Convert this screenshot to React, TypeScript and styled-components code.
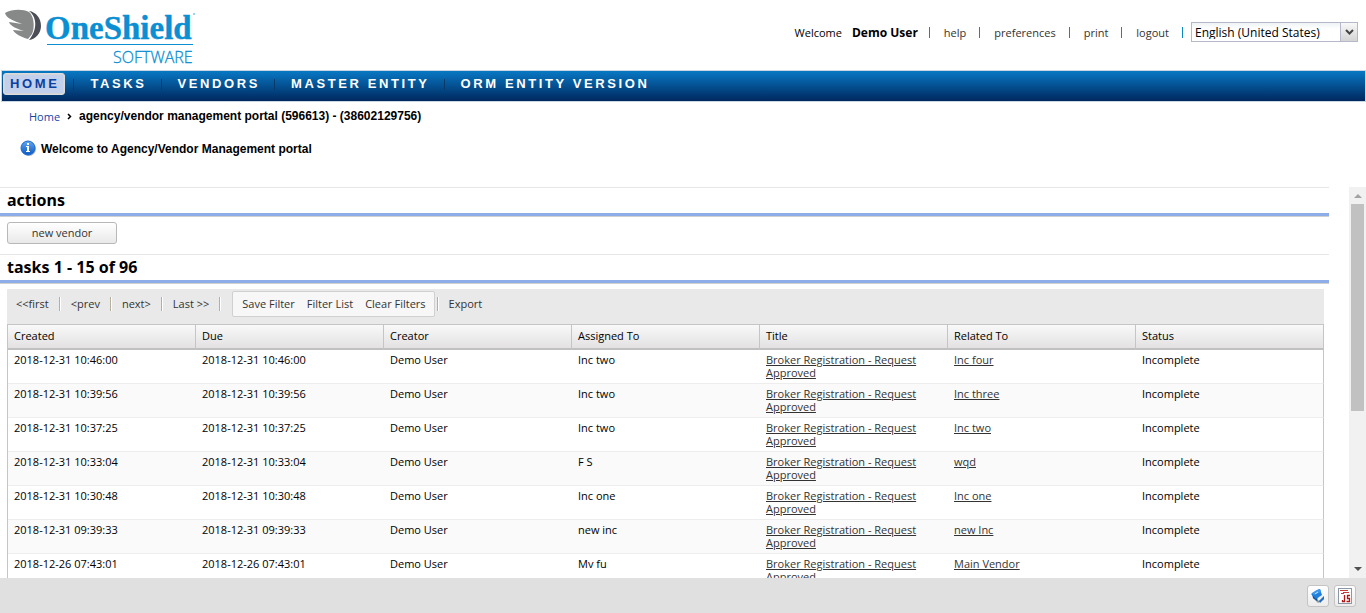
import React from 'react';
import styled, { createGlobalStyle } from 'styled-components';

const GlobalStyle = createGlobalStyle`
  * { box-sizing: border-box; }
  body {
    margin: 0;
    background: #fff;
    color: #000;
    font: 11px/13px "Open Sans", Tahoma, sans-serif;
  }
  button, select { font: inherit; color: inherit; }
`;

const Page = styled.div`
  display: flex;
  flex-direction: column;
  height: 100vh;
  overflow: hidden;
`;

const Header = styled.header`
  display: flex;
  flex: none;
  justify-content: space-between;
  align-items: flex-start;
  height: 70px;
`;

const Logo = styled.svg`
  display: block;
  flex: none;
`;

const UserBar = styled.div`
  display: flex;
  align-items: center;
  padding: 22px 8px 0 0;
`;

const Welcome = styled.span`
  margin-right: 10px;
`;

const UserName = styled.strong`
  margin-right: 11px;
  font-size: 12px;
`;

const Divider = styled.span<{ $last?: boolean }>`
  width: 1px;
  height: 11px;
  margin-right: ${p => (p.$last ? 8 : 14)}px;
  background: #0a8ac0;
`;

const UserLink = styled.a`
  margin-right: 13px;
  color: #333;
  text-decoration: none;
`;

const SelectBox = styled.label`
  display: flex;
  width: 167px;
  height: 20px;
  border: 1px solid #b5b8c8;
  background: linear-gradient(#eef3f5, #fff 6px);
`;

const LanguageSelect = styled.select`
  flex: 1;
  min-width: 0;
  padding: 0 3px;
  border: 0;
  background: none;
  appearance: none;
  font-size: 12px;
`;

const Trigger = styled.span`
  display: flex;
  align-items: center;
  justify-content: center;
  width: 17px;
  border-left: 1px solid #b5b8c8;
  background: linear-gradient(#f8f8f8, #d4d4d4);
`;

const Nav = styled.nav`
  display: flex;
  flex: none;
  align-items: flex-start;
  height: 32px;
  margin-left: 1px;
  padding: 2px 1px;
  border: 1px solid #c9d7e4;
  background: linear-gradient(#0878c4, #00285e);
`;

const NavItem = styled.a<{ $active?: boolean }>`
  height: 22px;
  padding: 0 ${p => (p.$active ? 5 : 14)}px 0 ${p => (p.$active ? 6 : 16)}px;
  border: ${p => (p.$active ? '1px solid #dcdcdc' : '1px solid transparent')};
  border-width: 1px ${p => (p.$active ? 1 : 0)}px;
  border-radius: 3px;
  background: ${p => (p.$active ? '#c3d0ec' : 'none')};
  box-shadow: ${p => (p.$active ? 'inset 0 0 0 1px #d5d5d5' : 'none')};
  color: ${p => (p.$active ? '#0a40a0' : '#fff')};
  font: bold 13px/20px "Liberation Sans", Arial, sans-serif;
  letter-spacing: 0.2em;
  text-decoration: none;
  white-space: nowrap;
`;

const NavDivider = styled.span<{ $wide?: boolean }>`
  width: 1px;
  height: 11px;
  margin: 6px 0 0 ${p => (p.$wide ? 8 : 0)}px;
  background: #0a3a68;
`;

const Breadcrumb = styled.nav`
  display: flex;
  flex: none;
  align-items: center;
  height: 28px;
  padding-left: 29px;
`;

const CrumbLink = styled.a`
  color: #1546a8;
  text-decoration: none;
`;

const Chevron = styled.svg`
  margin: 0 7px;
`;

const Strong = styled.strong`
  font: bold 12px/14px "Liberation Sans", Arial, sans-serif;
`;

const Notice = styled.div`
  display: flex;
  flex: none;
  gap: 5px;
  height: 57px;
  padding: 10px 0 0 20px;

  strong { padding-top: 2px; }
`;

const Body = styled.div`
  display: flex;
  flex: 1;
  gap: 20px;
  min-height: 0;
`;

const Content = styled.main`
  flex: 1;
  min-width: 0;
  overflow: hidden;
`;

const SectionTitle = styled.h2`
  height: 30px;
  margin: 0;
  padding-left: 7px;
  border-top: 1px solid #e6e6e6;
  border-bottom: 1px solid #d0d0d0;
  box-shadow: inset 0 -3px #8dade8;
  font: bold 16px/25px "Noto Sans", Tahoma, sans-serif;
`;

const Actions = styled.div`
  height: 37px;
  padding: 5px 7px;
`;

const ActionButton = styled.button`
  display: block;
  width: 110px;
  height: 22px;
  padding: 0 0 1px;
  border: 1px solid #b8b8b8;
  border-radius: 3px;
  background: linear-gradient(#fff, #e9e9e9);
  color: #333;
`;

const Grid = styled.div`
  margin: 5px 5px 0 7px;
`;

const Toolbar = styled.div`
  display: flex;
  align-items: center;
  height: 35px;
  padding: 0 0 5px 6px;
  background: #e9e9e9;
`;

const ToolButton = styled.button`
  padding: 0 3px 2px;
  border: 0;
  background: none;
  color: #333;
  white-space: nowrap;
`;

const ToolDivider = styled.span`
  width: 2px;
  height: 14px;
  margin: 0 7px;
  border-left: 1px solid #b5b09c;
  border-right: 1px solid #fff;
`;

const FilterGroup = styled.div`
  display: flex;
  align-items: center;
  gap: 6px;
  height: 26px;
  margin: 0 -5px 0 4px;
  padding: 0 5px 0 6px;
  border: 1px solid #d0d0d0;
  border-radius: 2px;
  background: #f7f7f7;
`;

const Table = styled.table`
  width: 100%;
  table-layout: fixed;
  border-collapse: separate;
  border-spacing: 0;
  border: solid #c5c5c5;
  border-width: 1px 0 0 1px;
`;

const Th = styled.th`
  height: 25px;
  padding: 0 6px 2px;
  border-right: 1px solid #c5c5c5;
  border-bottom: 2px solid #c0c0c0;
  background: linear-gradient(#f9f9f9, #e3e1e1);
  font-weight: normal;
  text-align: left;
`;

const Tr = styled.tr`
  &:nth-child(even) { background: #fafafa; }
`;

const Td = styled.td`
  height: 34px;
  padding: 3px 6px 4px;
  border-bottom: 1px solid #ededed;
  vertical-align: top;

  &:last-child { border-right: 1px solid #c5c5c5; }
`;

const CellLink = styled.a`
  display: block;
  max-width: 160px;
  color: #333;
  text-decoration: underline;
`;

const ScrollTrack = styled.div`
  display: flex;
  flex-direction: column;
  align-items: center;
  justify-content: space-between;
  width: 17px;
  background: #f1f1f1;
`;

const ScrollRail = styled.div`
  flex: 1;
  width: 13px;
`;

const ScrollThumb = styled.div`
  height: 58%;
  background: #c1c1c1;
`;

const Arrow = styled.svg`
  flex: none;
  display: block;
`;

const Footer = styled.footer`
  display: flex;
  flex: none;
  justify-content: flex-end;
  gap: 5px;
  height: 35px;
  padding: 7px 10px;
  background: #e0e0e0;
`;

const IconButton = styled.button`
  display: flex;
  align-items: center;
  justify-content: center;
  width: 22px;
  height: 22px;
  padding: 0;
  border: 1px solid #c4c4c4;
  border-radius: 3px;
  background: linear-gradient(#fff, #ececec);
`;

const columns = ['Created', 'Due', 'Creator', 'Assigned To', 'Title', 'Related To', 'Status'];

const tasks = [
  ['2018-12-31 10:46:00', 'Inc two', 'Inc four'],
  ['2018-12-31 10:39:56', 'Inc two', 'Inc three'],
  ['2018-12-31 10:37:25', 'Inc two', 'Inc two'],
  ['2018-12-31 10:33:04', 'F S', 'wqd'],
  ['2018-12-31 10:30:48', 'Inc one', 'Inc one'],
  ['2018-12-31 09:39:33', 'new inc', 'new Inc'],
  ['2018-12-26 07:43:01', 'Mv fu', 'Main Vendor'],
];

const userLinks = ['help', 'preferences', 'print', 'logout'];
const navItems = ['TASKS', 'VENDORS', 'MASTER ENTITY', 'ORM ENTITY VERSION'];
const pageButtons = ['<<first', '<prev', 'next>', 'Last >>'];
const filterButtons = ['Save Filter', 'Filter List', 'Clear Filters'];

function BrandLogo() {
  return (
    <Logo width="200" height="70" role="img" aria-label="OneShield Software">
      <path d="M5 13 C12 9 23 9 29 12 C34 16 35 27 32 34 L28 39 C21 37 15 34 13 30 L24 31 C17 29 10 26 9 22 L22 24 C14 21 6 18 5 13Z" fill="#878888" />
      <path d="M29 11 C36 12 41 18 41 26 C41 33 36 39 29 40 C34 34 36 27 35 21 C34 16 32 13 29 11Z" fill="#4b4d57" />
      <text x="45" y="39" fill="#0b8fd3" stroke="#0b8fd3" strokeWidth=".4" fontFamily="Liberation Serif, serif" fontWeight="bold" fontSize="33">OneShield</text>
      <rect x="47" y="44" width="146" height="1" fill="#0b8fd3" />
      <text x="113" y="63" fill="#0b8fd3" stroke="#0b8fd3" strokeWidth=".3" fontFamily="Open Sans, sans-serif" fontWeight="300" fontSize="16">SOFTWARE</text>
      <circle cx="194" cy="14" r="1" fill="#7cc4e8" />
    </Logo>
  );
}

function InfoIcon() {
  return (
    <svg width="16" height="16" viewBox="0 0 16 16" aria-hidden="true">
      <defs>
        <linearGradient id="info" x2="0" y2="1">
          <stop stopColor="#62a8f0" />
          <stop offset="1" stopColor="#0a58c4" />
        </linearGradient>
      </defs>
      <circle cx="9" cy="9" r="7" fill="#b9bcc2" />
      <circle cx="8" cy="8" r="7" fill="url(#info)" stroke="#1a6ad0" />
      <rect x="7" y="3" width="2" height="2" fill="#fff" />
      <path d="M6 6h3v5h1v1H6v-1h1V7H6z" fill="#fff" />
    </svg>
  );
}

function BookIcon() {
  return (
    <svg width="16" height="16" viewBox="0 0 16 16" aria-hidden="true">
      <path d="M3 10l5 5 6-4-2-2z" fill="#8e979f" />
      <path d="M2 6l1 4 4 3 1-2z" fill="#0d4f9c" />
      <path d="M7 11l4-4 3 2-5 4z" fill="#e8eef4" />
      <path d="M1 6l6-4 3-1 2 6-6 4z" fill="#1f7fdc" />
      <path d="M2 5l5-3 3-1 1 3-7 3z" fill="#3f97ea" />
      <path d="M9 13l5-5v3l-4 4z" fill="#1a6cc4" />
      <path d="M5 6l3-2" stroke="#c4e1fa" />
    </svg>
  );
}

function ScriptIcon() {
  return (
    <svg width="16" height="16" viewBox="0 0 16 16" aria-hidden="true">
      <rect x="1.5" y=".5" width="13" height="15" fill="#fff" stroke="#8b97a5" />
      <path d="M3 2.500h8M6 4.500h6M4 5.500h3" stroke="#c43c3c" />
      <path d="M7.500 7v6.500H5M5.500 12v2M13 7.500h-2.500v3h2v3H9.500" fill="none" stroke="#b01818" strokeWidth="1.3" />
    </svg>
  );
}

export default function App() {
  return (
    <Page>
      <GlobalStyle />
      <Header>
        <BrandLogo />
        <UserBar>
          <Welcome>Welcome</Welcome>
          <UserName>Demo User</UserName>
          {userLinks.map(label => (
            <React.Fragment key={label}>
              <Divider />
              <UserLink href="#">{label}</UserLink>
            </React.Fragment>
          ))}
          <Divider $last />
          <SelectBox>
            <LanguageSelect aria-label="Language">
              <option>English (United States)</option>
            </LanguageSelect>
            <Trigger>
              <svg width="9" height="6" viewBox="0 0 9 6" aria-hidden="true">
                <path d="M1 1l3.500 3.500L8 1" fill="none" stroke="#444" strokeWidth="2" />
              </svg>
            </Trigger>
          </SelectBox>
        </UserBar>
      </Header>

      <Nav>
        <NavItem href="#" $active>HOME</NavItem>
        {navItems.map((label, i) => (
          <React.Fragment key={label}>
            <NavDivider $wide={i === 0} />
            <NavItem href="#">{label}</NavItem>
          </React.Fragment>
        ))}
      </Nav>

      <Breadcrumb aria-label="Breadcrumb">
        <CrumbLink href="#">Home</CrumbLink>
        <Chevron width="5" height="7" viewBox="0 0 5 7" aria-hidden="true">
          <path d="M1 1l2.500 2.500L1 6" fill="none" stroke="#000" strokeWidth="1.5" />
        </Chevron>
        <Strong>agency/vendor management portal (596613) - (38602129756)</Strong>
      </Breadcrumb>

      <Notice>
        <InfoIcon />
        <Strong>Welcome to Agency/Vendor Management portal</Strong>
      </Notice>

      <Body>
        <Content>
          <SectionTitle>actions</SectionTitle>
          <Actions>
            <ActionButton type="button">new vendor</ActionButton>
          </Actions>
          <SectionTitle>tasks 1 - 15 of 96</SectionTitle>
          <Grid>
            <Toolbar>
              {pageButtons.map(label => (
                <React.Fragment key={label}>
                  <ToolButton type="button">{label}</ToolButton>
                  <ToolDivider />
                </React.Fragment>
              ))}
              <FilterGroup>
                {filterButtons.map(label => (
                  <ToolButton type="button" key={label}>{label}</ToolButton>
                ))}
              </FilterGroup>
              <ToolDivider />
              <ToolButton type="button">Export</ToolButton>
            </Toolbar>
            <Table>
              <thead>
                <tr>
                  {columns.map(name => <Th key={name}>{name}</Th>)}
                </tr>
              </thead>
              <tbody>
                {tasks.map(([date, assignee, related]) => (
                  <Tr key={date}>
                    <Td>{date}</Td>
                    <Td>{date}</Td>
                    <Td>Demo User</Td>
                    <Td>{assignee}</Td>
                    <Td><CellLink href="#">Broker Registration - Request Approved</CellLink></Td>
                    <Td><CellLink href="#">{related}</CellLink></Td>
                    <Td>Incomplete</Td>
                  </Tr>
                ))}
              </tbody>
            </Table>
          </Grid>
        </Content>
        <ScrollTrack>
          <Arrow width="17" height="17" viewBox="0 0 17 17" aria-hidden="true">
            <path d="M5 11l4-4 4 4z" fill="#a3a3a3" />
          </Arrow>
          <ScrollRail>
            <ScrollThumb />
          </ScrollRail>
          <Arrow width="17" height="17" viewBox="0 0 17 17" aria-hidden="true">
            <path d="M5 6l4 4 4-4z" fill="#505050" />
          </Arrow>
        </ScrollTrack>
      </Body>

      <Footer>
        <IconButton type="button" aria-label="Documentation"><BookIcon /></IconButton>
        <IconButton type="button" aria-label="Scripts"><ScriptIcon /></IconButton>
      </Footer>
    </Page>
  );
}
